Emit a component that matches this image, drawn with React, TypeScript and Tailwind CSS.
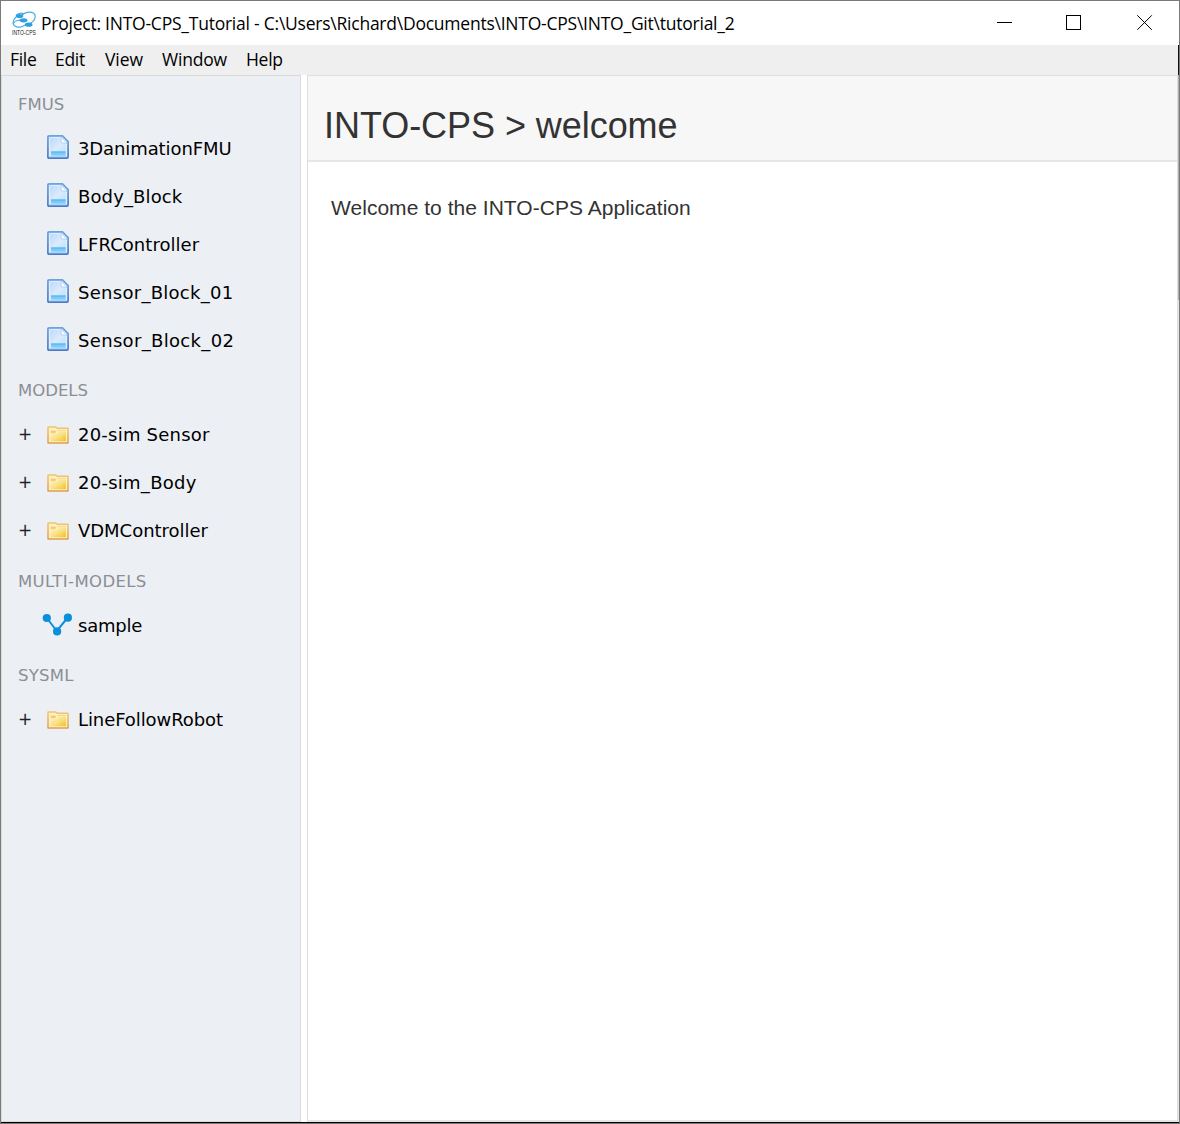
import type { ReactNode } from "react";

type Item = { label: string; tracking: string };

const fmus: Item[] = [
  { label: "3DanimationFMU", tracking: "tracking-[-0.1px]" },
  { label: "Body_Block", tracking: "tracking-[0.12px]" },
  { label: "LFRController", tracking: "tracking-[0.05px]" },
  { label: "Sensor_Block_01", tracking: "tracking-[0.28px]" },
  { label: "Sensor_Block_02", tracking: "tracking-[0.33px]" },
];

const models: Item[] = [
  { label: "20-sim Sensor", tracking: "tracking-[0.22px]" },
  { label: "20-sim_Body", tracking: "tracking-[0.26px]" },
  { label: "VDMController", tracking: "tracking-[-0.03px]" },
];

function FileIcon() {
  return (
    <svg width="22" height="24" viewBox="0 0 22 24" className="-mt-0.5 block">
      <defs>
        <linearGradient id="page" x1="0" y1="0" x2="1" y2="1">
          <stop offset="0" stopColor="#b5d5f7" />
          <stop offset="0.5" stopColor="#dcebfc" />
          <stop offset="1" stopColor="#b5dafb" />
        </linearGradient>
        <linearGradient id="edge" x1="0" y1="0" x2="0" y2="1">
          <stop offset="0" stopColor="#6ea3e0" />
          <stop offset="1" stopColor="#4a7cc2" />
        </linearGradient>
      </defs>
      <path d="M2 0.9 H15.5 L21.1 6.5 V22 Q21.1 23.1 20 23.1 H2 Q0.9 23.1 0.9 22 V2 Q0.9 0.9 2 0.9Z" fill="url(#page)" stroke="url(#edge)" strokeWidth="1.7" />
      <path d="M2.6 21.4 V2.6 H14 M19.4 9 V21.4" fill="none" stroke="#eef6ff" strokeWidth="1" opacity="0.75" />
      <path d="M14 2.2 V8 H20.2Z" fill="#f5faff" stroke="#a8cbf0" strokeWidth="0.8" />
      <rect x="4" y="16.5" width="14.5" height="4" fill="#7bcafc" />
      <path d="M4 17 H18.5" stroke="#4fb0f5" />
      <path d="M2.5 21.6 H19.5" stroke="#a9d0f6" />
    </svg>
  );
}

function FolderIcon() {
  return (
    <svg width="22" height="18" viewBox="0 0 22 18" className="mt-0.5 block">
      <defs>
        <linearGradient id="folder" x1="0" y1="0" x2="1" y2="1">
          <stop offset="0" stopColor="#fff3cc" />
          <stop offset="0.5" stopColor="#f9e185" />
          <stop offset="1" stopColor="#f0c222" />
        </linearGradient>
        <linearGradient id="rim" x1="0" y1="0" x2="0" y2="1">
          <stop offset="0" stopColor="#ecc777" />
          <stop offset="1" stopColor="#df9d58" />
        </linearGradient>
      </defs>
      <path d="M1 1 H8.5 L10.5 2.3 H21 V17 H1Z" fill="#fff0be" stroke="url(#rim)" strokeWidth="1.5" strokeLinejoin="round" />
      <path d="M3.5 15.2 V8 H9.5 L12 5.8 H19 V15.2Z" fill="url(#folder)" />
      <path d="M3.8 4.6 H8 L9.3 5.8 L8 7.2 H3.8Z" fill="#f3cb74" />
      <path d="M10.5 4.6 H19" stroke="#f4d484" />
    </svg>
  );
}

function GraphIcon() {
  return (
    <svg width="30" height="24" viewBox="0 0 30 24" className="-ml-0.5 block">
      <path d="M4.8 5 L14.8 18 L25.8 4.5" fill="none" stroke="#0a8fdc" strokeWidth="2" />
      <circle cx="4.8" cy="5" r="4.1" fill="#0a8fdc" />
      <circle cx="25.9" cy="4.7" r="4.1" fill="#0a8fdc" />
      <circle cx="15.1" cy="18.4" r="4.1" fill="#0a8fdc" />
    </svg>
  );
}

function AppLogo() {
  return (
    <div className="flex w-6 flex-col">
      <svg width="24" height="17" viewBox="0 0 24 17" className="block">
        <g fill="none" stroke="#4aaee3" strokeWidth="1.2">
          <path d="M4 6 Q0.5 9 1.2 13 Q3 17 9 15.8 Q12 15 13 13.8" />
          <path d="M10 4 Q13 1.2 17 1.2 Q23.3 1.2 23.2 5.5 Q23 10 18.5 12" />
          <path d="M4 4.5 Q8 0.5 12 3 M8 9 Q2 9.5 1.3 13" />
        </g>
        <g fill="#2f9fdd">
          <ellipse cx="7.5" cy="5" rx="3.8" ry="2.1" />
          <ellipse cx="11.5" cy="9.3" rx="3.9" ry="2.1" />
          <ellipse cx="16.7" cy="13.7" rx="3.8" ry="2.1" />
        </g>
      </svg>
      <span className="mt-px scale-y-150 font-['Liberation_Sans',sans-serif] text-[5px] leading-[7px] whitespace-nowrap text-[#222]">
        INTO-CPS
      </span>
    </div>
  );
}

function Heading({ label, className }: { label: string; className: string }) {
  return (
    <div className={`flex items-center pl-4 text-[16.5px] leading-none text-[#8b8e93] ${className}`}>{label}</div>
  );
}

function Row({ item, icon, expandable }: { item: Item; icon: ReactNode; expandable?: boolean }) {
  return (
    <div className="flex h-12 items-center">
      <span className="w-[37px] pl-4 text-[17px] leading-none text-[#222]">{expandable ? "+" : ""}</span>
      <span className="flex w-[37px] justify-center">{icon}</span>
      <span className={`pt-0.5 pl-0.5 text-[18px] leading-none whitespace-nowrap ${item.tracking}`}>{item.label}</span>
    </div>
  );
}

const menu = [
  { label: "File", className: "w-[45px]" },
  { label: "Edit", className: "w-[50px]" },
  { label: "View", className: "w-[57px] tracking-[-0.1px]" },
  { label: "Window", className: "w-[84px] tracking-[-0.2px]" },
  { label: "Help", className: "w-[45px]" },
];

export default function App() {
  return (
    <div className="flex h-[1124px] w-[1180px] flex-col overflow-hidden border border-[#7a7a7a] bg-white text-black">
      <header className="flex h-11 shrink-0 items-center font-['Open_Sans',sans-serif]">
        <span className="ml-[11px] w-[29px]">
          <AppLogo />
        </span>
        <h1 className="flex-1 pt-0.5 text-[17.5px] leading-none tracking-[-0.235px] whitespace-nowrap">
          Project: INTO-CPS_Tutorial - C:\Users\Richard\Documents\INTO-CPS\INTO_Git\tutorial_2
        </h1>
        <div className="flex items-center pr-[26px]">
          <svg width="16" height="16" viewBox="0 0 16 16" shapeRendering="crispEdges">
            <path d="M0 7.5 H15" stroke="#000" />
          </svg>
          <svg className="ml-[53px]" width="16" height="16" viewBox="0 0 16 16" shapeRendering="crispEdges">
            <rect x="0.5" y="0.5" width="14" height="14" fill="none" stroke="#000" />
          </svg>
          <svg className="ml-[55px]" width="16" height="16" viewBox="0 0 16 16">
            <path d="M0.3 0.3 L14.8 14.8 M14.8 0.3 L0.3 14.8" stroke="#000" />
          </svg>
        </div>
      </header>

      <nav className="flex h-[30px] shrink-0 items-center border-r border-[#111] bg-[#efefef] pl-[9px] font-['Open_Sans',sans-serif] text-[17.5px] leading-none tracking-[-0.3px]">
        {menu.map((m) => (
          <span key={m.label} className={m.className}>
            {m.label}
          </span>
        ))}
      </nav>

      <div className="flex min-h-0 flex-1 border-b border-black">
        <aside className="flex w-[300px] shrink-0 flex-col border border-[#dadada] bg-[#eceff4] font-['DejaVu_Sans',sans-serif]">
          <Heading label="FMUS" className="h-[48px] pt-[11px]" />
          {fmus.map((item) => (
            <Row key={item.label} item={item} icon={<FileIcon />} />
          ))}
          <Heading label="MODELS" className="h-[46px] pt-[8px]" />
          {models.map((item) => (
            <Row key={item.label} item={item} icon={<FolderIcon />} expandable />
          ))}
          <Heading label="MULTI-MODELS" className="h-[47px] pt-[9px] tracking-[0.38px]" />
          <Row item={{ label: "sample", tracking: "tracking-[-0.2px]" }} icon={<GraphIcon />} />
          <Heading label="SYSML" className="h-[46px] pt-[8px] tracking-[0.25px]" />
          <Row item={{ label: "LineFollowRobot", tracking: "tracking-[-0.08px]" }} icon={<FolderIcon />} expandable />
        </aside>

        <main className="ml-[6px] flex flex-1 flex-col border border-b-2 border-[#dedede] border-b-[#e6e6e6] font-['Liberation_Sans',sans-serif] text-[#333]">
          <div className="flex h-[86px] items-center border-b-2 border-[#e6e6e6] bg-[#f7f7f7] pt-4 pl-4 text-[36px] leading-none tracking-[-0.05px]">
            INTO-CPS &gt; welcome
          </div>
          <p className="flex-1 pt-[35px] pl-[23px] text-[21px] leading-none tracking-[0.03px]">
            Welcome to the INTO-CPS Application
          </p>
        </main>
        <div className="w-px bg-[#e8e8e8]">
          <div className="h-[225px] bg-[#adadad]" />
        </div>
      </div>
    </div>
  );
}
